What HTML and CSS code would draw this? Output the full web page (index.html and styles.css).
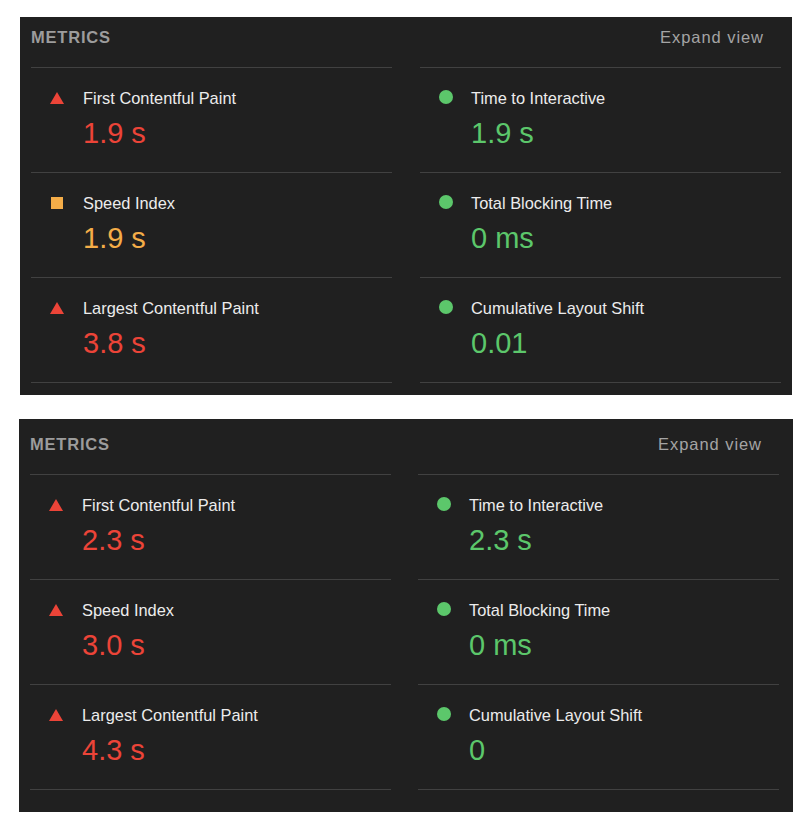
FILE: index.html
```html
<!DOCTYPE html>
<html>
<head>
<meta charset="utf-8">
<link rel="stylesheet" href="styles.css">
</head>
<body>
<section class="panel panel-a">
  <header class="head"><span class="title">METRICS</span><span class="expand">Expand view</span></header>
  <div class="grid">
    <div class="col">
      <div class="metric"><span class="icon"><svg class="tri" viewBox="0 0 14 12" width="14" height="12"><polygon points="7,0 14,12 0,12"/></svg></span><div class="label">First Contentful Paint</div><div class="value fail">1.9 s</div></div>
      <div class="metric"><span class="icon"><span class="sq"></span></span><div class="label">Speed Index</div><div class="value avg">1.9 s</div></div>
      <div class="metric"><span class="icon"><svg class="tri" viewBox="0 0 14 12" width="14" height="12"><polygon points="7,0 14,12 0,12"/></svg></span><div class="label">Largest Contentful Paint</div><div class="value fail">3.8 s</div></div>
    </div>
    <div class="col">
      <div class="metric"><span class="icon"><span class="dot"></span></span><div class="label">Time to Interactive</div><div class="value pass">1.9 s</div></div>
      <div class="metric"><span class="icon"><span class="dot"></span></span><div class="label">Total Blocking Time</div><div class="value pass">0 ms</div></div>
      <div class="metric"><span class="icon"><span class="dot"></span></span><div class="label">Cumulative Layout Shift</div><div class="value pass">0.01</div></div>
    </div>
  </div>
</section>
<section class="panel panel-b">
  <header class="head"><span class="title">METRICS</span><span class="expand">Expand view</span></header>
  <div class="grid">
    <div class="col">
      <div class="metric"><span class="icon"><svg class="tri" viewBox="0 0 14 12" width="14" height="12"><polygon points="7,0 14,12 0,12"/></svg></span><div class="label">First Contentful Paint</div><div class="value fail">2.3 s</div></div>
      <div class="metric"><span class="icon"><svg class="tri" viewBox="0 0 14 12" width="14" height="12"><polygon points="7,0 14,12 0,12"/></svg></span><div class="label">Speed Index</div><div class="value fail">3.0 s</div></div>
      <div class="metric"><span class="icon"><svg class="tri" viewBox="0 0 14 12" width="14" height="12"><polygon points="7,0 14,12 0,12"/></svg></span><div class="label">Largest Contentful Paint</div><div class="value fail">4.3 s</div></div>
    </div>
    <div class="col">
      <div class="metric"><span class="icon"><span class="dot"></span></span><div class="label">Time to Interactive</div><div class="value pass">2.3 s</div></div>
      <div class="metric"><span class="icon"><span class="dot"></span></span><div class="label">Total Blocking Time</div><div class="value pass">0 ms</div></div>
      <div class="metric"><span class="icon"><span class="dot"></span></span><div class="label">Cumulative Layout Shift</div><div class="value pass">0</div></div>
    </div>
  </div>
</section>
</body>
</html>
```

FILE: styles.css
```css
html, body {
  margin: 0;
  padding: 0;
  background: #ffffff;
}

body {
  font-family: "Liberation Sans", Arial, sans-serif;
}

.panel {
  background: #202020;
  box-sizing: border-box;
}

.panel-a {
  margin: 17px 0 0 20px;
  width: 772px;
  padding: 0 11px 12px 11px;
}

.panel-b {
  margin: 24px 0 0 19px;
  width: 774px;
  padding: 0 14px 22px 11px;
}

.head {
  display: flex;
  justify-content: space-between;
  align-items: baseline;
  line-height: 20px;
  padding: 10px 17px 20px 0;
}

.panel-b .head {
  padding-top: 15px;
}

.title {
  font-size: 16.5px;
  font-weight: bold;
  letter-spacing: 0.8px;
  color: #9c9c9c;
}

.expand {
  font-size: 16.5px;
  letter-spacing: 0.95px;
  color: #a4a4a4;
}

.grid {
  display: grid;
  grid-template-columns: 1fr 1fr;
  column-gap: 28px;
}

.panel-b .grid {
  column-gap: 27px;
}

.col {
  border-bottom: 1px solid #414141;
}

.metric {
  display: grid;
  grid-template-columns: 52px 1fr;
  grid-template-rows: 20px 34px;
  row-gap: 8px;
  border-top: 1px solid #414141;
  padding: 20px 0 22px 0;
}

.col + .col .metric {
  grid-template-columns: 51px 1fr;
}

.icon {
  grid-column: 1;
  grid-row: 1;
  width: 14px;
  height: 20px;
  margin-left: 19px;
  display: flex;
  align-items: center;
  justify-content: center;
}

.tri {
  display: block;
  fill: #ec4438;
  margin-top: -1px;
}

.sq {
  display: block;
  width: 12px;
  height: 12px;
  background: #f4ad48;
}

.dot {
  display: block;
  width: 14px;
  height: 14px;
  border-radius: 50%;
  background: #5cc76b;
  margin-top: -2px;
}

.label {
  grid-column: 2;
  grid-row: 1;
  font-size: 16.4px;
  line-height: 20px;
  color: #ececec;
  white-space: nowrap;
}

.value {
  grid-column: 2;
  grid-row: 2;
  font-size: 29px;
  line-height: 34px;
  white-space: nowrap;
}

.fail {
  color: #ec4438;
}

.avg {
  color: #f4ad48;
}

.pass {
  color: #5cc76b;
}
```
